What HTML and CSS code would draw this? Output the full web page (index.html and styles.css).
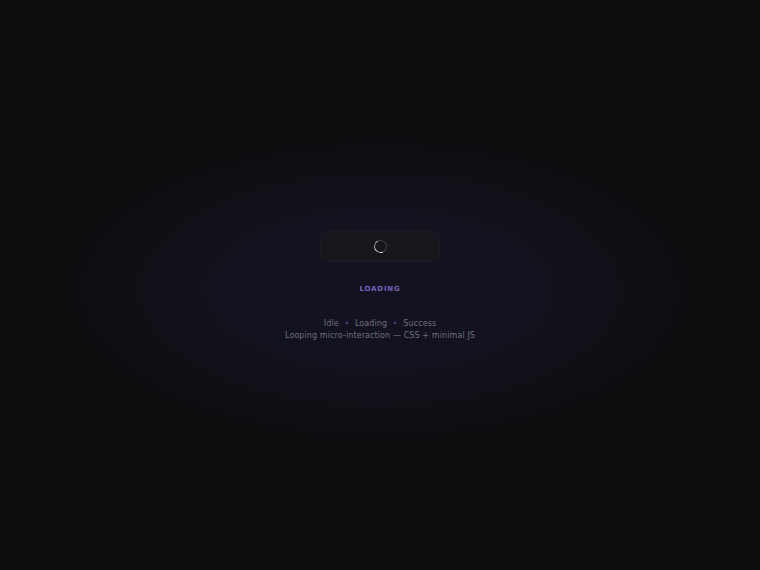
FILE: index.html
```html
<!DOCTYPE html>
<html lang="en">
<head>
  <meta charset="UTF-8">
  <title>Loading button</title>
  <link rel="stylesheet" href="styles.css">
</head>
<body>
  <main class="stage">
    <button class="btn is-loading" type="button">
      <span class="spinner"></span>
    </button>
    <div class="status">Loading</div>
    <div class="caption">
      <p>Idle <span class="dot">&bull;</span> Loading <span class="dot">&bull;</span> Success</p>
      <p>Looping micro-interaction &mdash; CSS + minimal JS</p>
    </div>
  </main>
</body>
</html>
```

FILE: styles.css
```css
html, body {
  margin: 0;
  height: 100%;
}
body {
  background-color: #0e0e11;
  background-image: radial-gradient(ellipse 310px 150px at 380px 290px, #141221 0%, #131220 40%, #0e0e11 100%);
  font-family: "DejaVu Sans", sans-serif;
  color: #70707c;
}
.stage {
  display: flex;
  flex-direction: column;
  align-items: center;
  padding-top: 230px;
}
.btn {
  width: 120px;
  height: 32px;
  border: 1px solid rgba(255, 255, 255, 0.025);
  border-radius: 9px;
  background: #17161c;
  display: flex;
  align-items: center;
  justify-content: center;
  padding: 0;
}
.spinner {
  width: 11px;
  height: 11px;
  border-radius: 50%;
  border: 1.5px solid #45444c;
  border-bottom-color: #d8d8dc;
  border-left-color: #a9a9b0;
  transform: rotate(20deg);
}
.status {
  margin-top: 23px;
  font-size: 7px;
  line-height: 9px;
  font-weight: bold;
  letter-spacing: 0.8px;
  text-transform: uppercase;
  color: #7464bd;
}
.caption {
  margin-top: 24px;
  text-align: center;
  font-size: 8px;
  letter-spacing: 0.1px;
  line-height: 12px;
}
.caption p {
  margin: 0;
}
.dot {
  color: #4d3f86;
  margin: 0 3px;
}
```
